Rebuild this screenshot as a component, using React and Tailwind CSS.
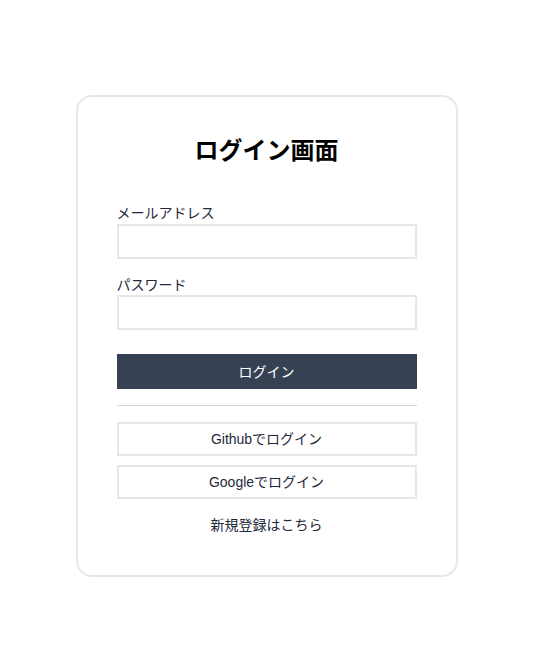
import React from 'react';

const font = { fontFamily: '"Liberation Sans", "Noto Sans CJK JP", sans-serif' };

export default function App() {
  return (
    <div className="flex min-h-screen justify-center bg-white pt-[95px] pr-2" style={font}>
      <div className="h-fit w-[382px] rounded-2xl border-2 border-gray-200 px-[39px] pt-[38px] pb-10">
        <h1 className="text-center text-2xl font-bold text-black">ログイン画面</h1>

        <form className="mt-[36px] flex flex-col" onSubmit={(e) => e.preventDefault()}>
          <label className="text-sm text-gray-800">メールアドレス</label>
          <input type="email" className="mt-[1px] h-[35px] w-full border-2 border-gray-200 px-2 text-sm outline-none" />

          <label className="mt-4 text-sm text-gray-800">パスワード</label>
          <input type="password" className="h-[35px] w-full border-2 border-gray-200 px-2 text-sm outline-none" />

          <button type="submit" className="mt-6 h-[35px] w-full bg-gray-700 text-sm text-white">
            ログイン
          </button>
        </form>

        <hr className="mt-4 border-gray-300" />

        <div className="mt-4 flex flex-col gap-[9px]">
          <button className="h-[34px] w-full border-2 border-gray-200 text-sm text-gray-800">Githubでログイン</button>
          <button className="h-[34px] w-full border-2 border-gray-200 text-sm text-gray-800">Googleでログイン</button>
        </div>

        <p className="mt-4 text-center text-sm text-gray-800">新規登録はこちら</p>
      </div>
    </div>
  );
}
